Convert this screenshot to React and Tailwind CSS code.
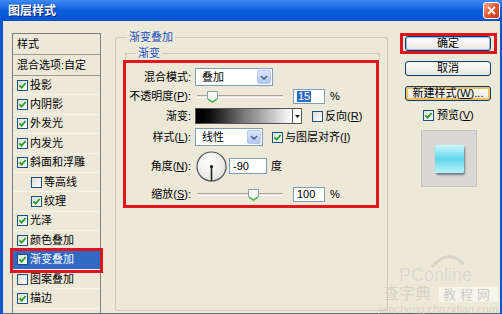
import React from "react";

const layers = [
  { t: "投影", on: true },
  { t: "内阴影", on: true },
  { t: "外发光", on: true },
  { t: "内发光", on: true },
  { t: "斜面和浮雕", on: true },
  { t: "等高线", on: false, sub: true },
  { t: "纹理", on: true, sub: true },
  { t: "光泽", on: true },
  { t: "颜色叠加", on: true },
  { t: "渐变叠加", on: true, sel: true },
  { t: "图案叠加", on: false },
  { t: "描边", on: true },
];

const Check = ({ on }) => (
  <span className="flex h-[11px] w-[11px] shrink-0 items-center justify-center border border-[#1C5180] bg-linear-to-br from-[#DCDCD7] to-white">
    {on && (
      <svg width="9" height="9" viewBox="0 0 9 9">
        <path d="M1.5 4.3 L3.6 6.6 L7.6 2" fill="none" stroke="#21A121" strokeWidth="1.8" />
      </svg>
    )}
  </span>
);

const Select = ({ w, text }) => (
  <div className={`ml-[4px] flex h-[18px] items-center border border-[#7F9DB9] bg-white ${w}`}>
    <span className="flex-1 pl-[6px]">{text}</span>
    <span className="mr-[1px] flex h-[14px] w-[14px] items-center justify-center rounded-[2px] border border-[#B5C8F2] bg-linear-to-b from-[#DCE6FC] to-[#B2C7F4]">
      <svg width="8" height="5" viewBox="0 0 8 5">
        <path d="M1 1 L4 4 L7 1" fill="none" stroke="#4D6185" strokeWidth="1.6" />
      </svg>
    </span>
  </div>
);

// thumb position is handed in as a full class name
const Slider = ({ thumb }) => (
  <div className="relative ml-[6px] h-full w-[86px]">
    <div className="absolute left-0 right-0 top-[8px] h-[3px] border-y border-t-[#A9A595] border-b-white bg-[#E9E6D8]" />
    <svg className={`absolute top-[4px] ${thumb}`} width="11" height="12" viewBox="0 0 11 12">
      <path d="M0.5 0.5 H10.5 V8 L5.5 11.5 L0.5 8 Z" fill="#F8F8F4" stroke="#8A9AAE" />
      <path d="M1.2 8.2 L5.5 11 L9.8 8.2" fill="none" stroke="#3FB63F" strokeWidth="1.4" />
    </svg>
  </div>
);

const Field = ({ w, children }) => (
  <div className={`flex h-[15px] items-center border border-[#7F9DB9] bg-white pl-[3px] ${w}`}>{children}</div>
);

const Btn = ({ children, ring }) => (
  <div
    className={`flex h-[15px] w-[86px] items-center justify-center rounded-[3px] border border-[#003C74] bg-linear-to-b from-white to-[#E8E6DE] ${ring}`}
  >
    {children}
  </div>
);

const Row = ({ label, mt, h, children }) => (
  <div className={`flex items-center ${mt} ${h}`}>
    <span className="w-[65px] shrink-0 text-right whitespace-nowrap">{label}</span>
    {children}
  </div>
);

export default function App() {
  return (
    <div className="relative flex h-[314px] w-[502px] flex-col overflow-hidden bg-[#0A55D6] font-['Liberation_Sans','Noto_Sans_CJK_SC',sans-serif] text-[11px] leading-none text-black">
      {/* title bar */}
      <div className="flex h-[21px] shrink-0 items-center bg-linear-to-b from-[#3C88F3] via-[#0B5CDC] to-[#0852D2] pl-[8px] pr-[2px]">
        <span className="flex-1 text-[12px] font-bold text-white [text-shadow:1px_1px_0_#0A2C80]">图层样式</span>
        <span className="flex h-[17px] w-[17px] items-center justify-center rounded-[3px] border border-white bg-linear-to-br from-[#F2A58A] via-[#E05A30] to-[#C23A18]">
          <svg width="9" height="9" viewBox="0 0 9 9">
            <path d="M1 1 L8 8 M8 1 L1 8" stroke="white" strokeWidth="1.8" />
          </svg>
        </span>
      </div>

      {/* body */}
      <div className="ml-[3px] mr-[2px] flex min-h-0 flex-1 border-b border-[#5E6A7E] bg-[#ECE9D8]">
        {/* style list */}
        <div className="ml-[9px] mt-[12px] flex w-[89px] flex-col self-stretch border border-b-0 border-[#7D7D7D]">
          <div className="flex h-[21px] shrink-0 items-center border-b border-[#9C9A90] pl-[4px]">样式</div>
          <div className="flex h-[21px] shrink-0 items-center border-b border-[#9C9A90] pl-[4px] whitespace-nowrap">
            混合选项:自定
          </div>
          {layers.map((l) => (
            <div
              key={l.t}
              className={`flex h-[19.4px] shrink-0 items-center gap-[2px] border-b border-[#F6F4EC] ${
                l.sub ? "pl-[18px]" : "pl-[4px]"
              } ${l.sel ? "bg-[#316AC5] text-white outline-[3px] outline-[#E0141C]" : ""}`}
            >
              <Check on={l.on} />
              <span>{l.t}</span>
            </div>
          ))}
        </div>

        {/* gradient overlay group */}
        <div className="mb-[2px] ml-[14px] mt-[9px] flex w-[273px] flex-col self-stretch">
          <div className="flex h-[14px] shrink-0 items-start">
            <div className="mt-[7px] h-[7px] w-[12px] rounded-tl-[3px] border-l border-t border-[#CFCCBE]" />
            <span className="px-[2px] leading-[14px] text-[#1C4FC6]">渐变叠加</span>
            <div className="mt-[7px] h-[7px] flex-1 rounded-tr-[3px] border-r border-t border-[#CFCCBE]" />
          </div>
          <div className="flex flex-1 flex-col rounded-b-[3px] border-x border-b border-[#CFCCBE]">
            {/* inner group title */}
            <div className="ml-[9px] mr-[7px] mt-[2px] flex h-[14px] shrink-0 items-start">
              <div className="mt-[7px] h-[7px] w-[11px] border-l border-t border-[#CFCCBE]" />
              <span className="px-[2px] leading-[14px] text-[#1C4FC6]">渐变</span>
              <div className="mt-[7px] h-[7px] flex-1 border-r border-t border-[#CFCCBE]" />
            </div>

            {/* highlighted settings */}
            <div className="ml-[7px] flex h-[148px] w-[256px] flex-col border-[3px] border-[#E3161C]">
              <Row label="混合模式:" mt="mt-[5px]" h="h-[18px]">
                <Select w="w-[78px]" text="叠加" />
              </Row>

              <Row
                label={
                  <>
                    不透明度(<span className="underline">P</span>):
                  </>
                }
                mt="mt-[1px]"
                h="h-[19px]"
              >
                <Slider thumb="left-[10px]" />
                <div className="ml-[10px]">
                  <Field w="w-[32px]">
                    <span className="bg-[#316AC5] px-[1px] text-white">15</span>
                  </Field>
                </div>
                <span className="ml-[5px]">%</span>
              </Row>

              <Row label="渐变:" mt="mt-[1px]" h="h-[18px]">
                <div className="ml-[4px] flex h-[16px] w-[107px] border border-[#555]">
                  <div className="flex-1 bg-linear-to-r from-black via-[#7A7A7A] to-white" />
                  <div className="flex w-[9px] items-center justify-center border-l border-[#555] bg-white">
                    <svg width="5" height="3" viewBox="0 0 5 3">
                      <path d="M0 0 H5 L2.5 3 Z" fill="#111" />
                    </svg>
                  </div>
                </div>
                <span className="ml-[10px]">
                  <Check on={false} />
                </span>
                <span className="ml-[2px]">
                  反向(<span className="underline">R</span>)
                </span>
              </Row>

              <Row
                label={
                  <>
                    样式(<span className="underline">L</span>):
                  </>
                }
                mt="mt-[2px]"
                h="h-[20px]"
              >
                <Select w="w-[68px]" text="线性" />
                <span className="ml-[9px]">
                  <Check on />
                </span>
                <span className="ml-[2px] whitespace-nowrap">
                  与图层对齐(<span className="underline">I</span>)
                </span>
              </Row>

              <Row
                label={
                  <>
                    角度(<span className="underline">N</span>):
                  </>
                }
                mt="mt-[3px]"
                h="h-[32px]"
              >
                <svg className="ml-[5px]" width="31" height="31" viewBox="0 0 31 31">
                  <defs>
                    <radialGradient id="dial" cx="40%" cy="35%" r="70%">
                      <stop offset="0" stopColor="#FFFFFF" />
                      <stop offset="1" stopColor="#E4E2DA" />
                    </radialGradient>
                  </defs>
                  <circle cx="15.5" cy="15.5" r="14.5" fill="url(#dial)" stroke="#4F5660" strokeWidth="1.2" />
                  <line x1="15.5" y1="15.5" x2="15.5" y2="30" stroke="#1A1A1A" strokeWidth="1.5" />
                  <circle cx="15.5" cy="15.5" r="1.6" fill="#1A1A1A" />
                </svg>
                <div className="ml-[2px]">
                  <Field w="w-[38px] h-[16px]">-90</Field>
                </div>
                <span className="ml-[4px]">度</span>
              </Row>

              <Row
                label={
                  <>
                    缩放(<span className="underline">S</span>):
                  </>
                }
                mt="mt-[3px]"
                h="h-[18px]"
              >
                <Slider thumb="left-[51px]" />
                <div className="ml-[10px]">
                  <Field w="w-[32px]">100</Field>
                </div>
                <span className="ml-[5px]">%</span>
              </Row>
            </div>
          </div>
        </div>

        {/* buttons */}
        <div className="ml-[12px] mt-[12px] flex w-[97px] flex-col">
          <div className="border-[3px] border-[#E0141C] pl-[2px] pr-[3px]">
            <Btn ring="shadow-[inset_0_0_0_1px_#9DB9EB]">确定</Btn>
          </div>
          <div className="ml-[5px] mt-[7px]">
            <Btn ring="">取消</Btn>
          </div>
          <div className="ml-[5px] mt-[10px]">
            <Btn ring="shadow-[inset_0_0_0_2px_#F5C15A] whitespace-nowrap">
              新建样式(<span className="underline">W</span>)...
            </Btn>
          </div>
          <div className="ml-[23px] mt-[8px] flex h-[13px] items-center gap-[3px]">
            <Check on />
            <span>
              预览(<span className="underline">V</span>)
            </span>
          </div>
          <div className="ml-[21px] mt-[8px] flex h-[57px] w-[56px] items-center justify-center border border-[#C4C2BA] bg-[#D9D8D4]">
            <div className="h-[28px] w-[29px] rounded-[2px] bg-linear-to-b from-[#C8F6FB] via-[#5ED7EE] to-[#B8F1F8] shadow-[1px_2px_2px_#6E7C86]" />
          </div>
        </div>
      </div>

      {/* site watermark over the corner */}
      <div className="pointer-events-none absolute bottom-0 right-[4px] flex w-[130px] flex-col items-end opacity-75">
        <svg className="mr-[30px]" width="40" height="16" viewBox="0 0 40 16">
          <path d="M4 15 Q20 -4 36 12" fill="none" stroke="#D2D0C6" strokeWidth="3" />
        </svg>
        <span className="mr-[26px] text-[18px] leading-[15px] text-[#D4D2C8] [text-shadow:0_0_1px_#fff]">PConline</span>
        <div className="mt-[3px] flex items-center gap-[8px]">
          <span className="text-[16px] leading-[16px] text-[#CFCDC3]">查字典</span>
          <span className="bg-white/70 px-[4px] text-[13px] leading-[15px] tracking-[4px] text-[#C6C4BA]">教程网</span>
        </div>
        <span className="mt-[2px] text-[11px] leading-[10px] text-[#CFCDC3]">jiaocheng.chazidian.com</span>
      </div>
    </div>
  );
}
